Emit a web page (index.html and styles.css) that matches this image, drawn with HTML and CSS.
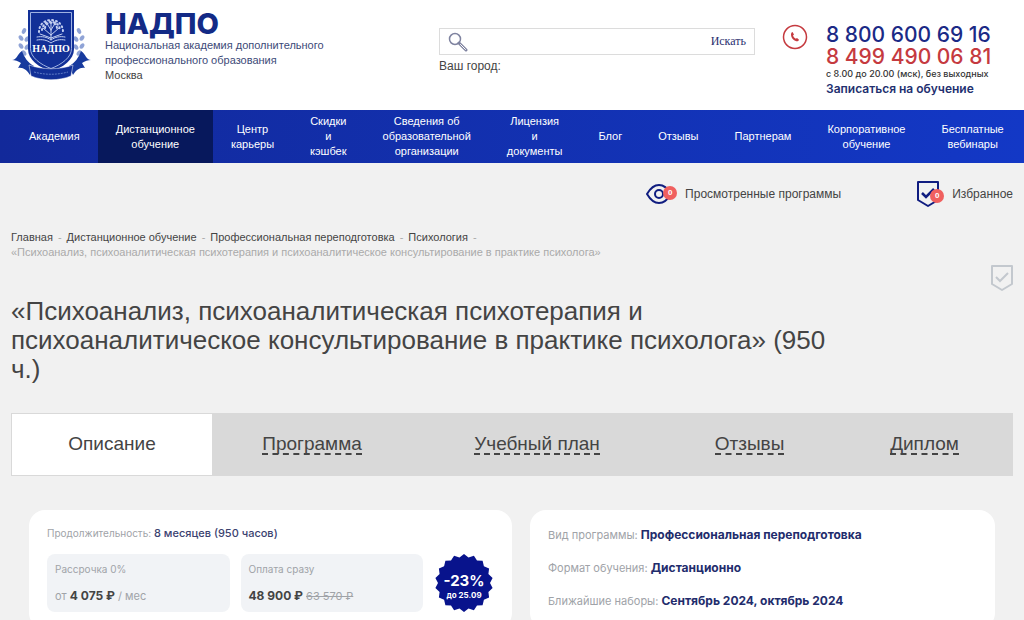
FILE: index.html
```
<!DOCTYPE html>
<html lang="ru">

<head>
    <meta charset="UTF-8">
    <meta name="viewport" content="width=device-width, initial-scale=1">
    <title>НАДПО</title>
    <link rel="stylesheet" href="styles.css">
</head>

<body>
    <header class="header">
        <a class="brand" href="#">
            <svg class="logo" viewBox="0 0 80 72" aria-hidden="true">
                <g fill="#8fa3d6">
                    <ellipse cx="12" cy="22" rx="2" ry="3" transform="rotate(25 12 22)" />
                    <ellipse cx="9" cy="29" rx="2" ry="3" transform="rotate(-35 9 29)" />
                    <ellipse cx="15" cy="30" rx="2" ry="3" transform="rotate(35 15 30)" />
                    <ellipse cx="9" cy="37" rx="2" ry="3" transform="rotate(-35 9 37)" />
                    <ellipse cx="15" cy="38" rx="2" ry="3" transform="rotate(35 15 38)" />
                    <ellipse cx="12" cy="44" rx="2" ry="3" transform="rotate(-35 12 44)" />
                    <ellipse cx="67" cy="22" rx="2" ry="3" transform="rotate(-25 67 22)" />
                    <ellipse cx="64" cy="30" rx="2" ry="3" transform="rotate(-35 64 30)" />
                    <ellipse cx="70" cy="29" rx="2" ry="3" transform="rotate(35 70 29)" />
                    <ellipse cx="64" cy="38" rx="2" ry="3" transform="rotate(-35 64 38)" />
                    <ellipse cx="70" cy="37" rx="2" ry="3" transform="rotate(35 70 37)" />
                    <ellipse cx="67" cy="44" rx="2" ry="3" transform="rotate(35 67 44)" />
                </g>
                <path fill="#173a9e" d="M0 51c5 0 5-6 10-9 2 6 6 12 12 15l-4 9c-3-5-7-8-12-7l3-5c-3-2-6-3-9-3zM79 51c-5 0-5-6-10-9-2 6-6 12-12 15l4 9c3-5 7-8 12-7l-3-5c3-2 6-3 9-3z" />
                <path fill="#123097" d="M16 1h46v39c0 11-11 18-23 23-12-5-23-12-23-23z" />
                <path fill="none" stroke="#9fb2e2" d="M18.500 3.500h41v36c0 9-10 16-20.500 20-10.500-4-20.500-11-20.500-20z" />
                <g fill="none" stroke="#c3cff0" stroke-linecap="round">
                    <path d="M39 31V14M39 26l-8-7M39 26l8-7M39 21l-5-8M39 21l5-8M39 29l-11-4M39 29l11-4" />
                    <path stroke-width="2" stroke-dasharray="1 3" d="M27 23c0-16 24-16 24 0M30 21c1-11 17-11 18 0M33 19c1-7 11-7 12 0" />
                    <path d="M25 28c5-1 10 0 14 3 4-3 9-4 14-3M25 31c5-1 10 0 14 3 4-3 9-4 14-3" />
                </g>
                <text class="logo-text" x="39" y="43" text-anchor="middle">НАДПО</text>
                <path fill="#123097" stroke="#fff" stroke-width="0.500" d="M17 56c14 5 30 5 44 0l-2 11c-12 5-28 5-40 0z" />
                <path fill="none" stroke="#5f7cc6" stroke-dasharray="2 1" d="M22 63c11 3 23 3 34 0" />
            </svg>
            <span class="brand-text">
                <strong class="brand-name">НАДПО</strong>
                <span>Национальная академия дополнительного</span>
                <span>профессионального образования</span>
                <span class="brand-city">Москва</span>
            </span>
        </a>

        <form class="search">
            <div class="search-box">
                <svg class="search-icon" viewBox="0 0 20 20" aria-hidden="true">
                    <circle cx="7" cy="7" r="5.500" fill="none" stroke="#7f83a0" stroke-width="1.500" />
                    <path d="M11 11l7 7" stroke="#7f83a0" stroke-width="3" stroke-linecap="round" />
                    <path d="M12.500 12.500l5 5" stroke="#fff" stroke-linecap="round" />
                </svg>
                <input class="search-input" type="text" aria-label="Поиск">
                <button class="search-button" type="submit">Искать</button>
            </div>
            <span class="city">Ваш город:</span>
        </form>

        <div class="contacts">
            <svg class="phone-icon" viewBox="0 0 26 26" aria-hidden="true">
                <circle cx="13" cy="13" r="11.500" fill="none" stroke="#c53a3f" stroke-width="1.500" />
                <path fill="#c53a3f" d="M10.500 8l1.500 2.500-1 1c.5 1.500 1.500 2.500 2.800 3.200l1.200-.7 2 1.700c-.5 1.300-1.500 1.800-2.700 1.500-3-.8-5.300-3.700-5.300-6.700 0-1.200.5-2.200 1.500-2.500z" />
            </svg>
            <div class="contacts-text">
                <a class="phone" href="tel:88006006916">8 800 600 69 16</a>
                <a class="phone phone-red" href="tel:84994900681">8 499 490 06 81</a>
                <span class="hours">с 8.00 до 20.00 (мск), без выходных</span>
                <a class="signup" href="#">Записаться на обучение</a>
            </div>
        </div>
    </header>

    <nav class="nav">
        <a href="#">Академия</a>
        <a class="active" href="#">Дистанционное<br>обучение</a>
        <a href="#">Центр<br>карьеры</a>
        <a href="#">Скидки<br>и<br>кэшбек</a>
        <a href="#">Сведения об<br>образовательной<br>организации</a>
        <a href="#">Лицензия<br>и<br>документы</a>
        <a href="#">Блог</a>
        <a href="#">Отзывы</a>
        <a href="#">Партнерам</a>
        <a href="#">Корпоративное<br>обучение</a>
        <a href="#">Бесплатные<br>вебинары</a>
    </nav>

    <main class="page">
        <div class="user-links">
            <a class="user-link" href="#">
                <span class="icon-wrap">
                    <svg class="eye-icon" viewBox="0 0 26 20" aria-hidden="true">
                        <path fill="none" stroke="#101d80" stroke-width="2" d="M1 10c7-12 17-12 24 0-7 12-17 12-24 0z" />
                        <circle cx="13" cy="10" r="4" fill="none" stroke="#101d80" stroke-width="2" />
                    </svg>
                    <span class="count">0</span>
                </span>
                Просмотренные программы
            </a>
            <a class="user-link" href="#">
                <span class="icon-wrap">
                    <svg class="flag-icon" viewBox="0 0 22 26" aria-hidden="true">
                        <path fill="none" stroke="#101d80" stroke-width="2" stroke-linejoin="round" d="M1 1h20v18l-10 6-10-6z" />
                        <path fill="none" stroke="#101d80" stroke-width="2.500" d="M5 12l4 4 8-8" />
                    </svg>
                    <span class="count">0</span>
                </span>
                Избранное
            </a>
        </div>

        <div class="breadcrumbs">
            <a href="#">Главная</a><i>-</i><a href="#">Дистанционное обучение</a><i>-</i><a href="#">Профессиональная переподготовка</a><i>-</i><a href="#">Психология</a><i>-</i>
            <div class="current">«Психоанализ, психоаналитическая психотерапия и психоаналитическое консультирование в практике психолога»</div>
        </div>

        <button class="favorite" type="button" aria-label="В избранное">
            <svg viewBox="0 0 22 26" aria-hidden="true">
                <path fill="none" stroke="#c3c8ce" stroke-width="2" stroke-linejoin="round" d="M1 1h20v18l-10 6-10-6z" />
                <path fill="none" stroke="#c3c8ce" stroke-width="2" d="M5 12l4 4 8-8" />
            </svg>
        </button>

        <h1>«Психоанализ, психоаналитическая психотерапия и психоаналитическое консультирование в практике психолога» (950 ч.)</h1>

        <div class="tabs">
            <a class="tab active" href="#"><span>Описание</span></a>
            <a class="tab" href="#"><span>Программа</span></a>
            <a class="tab tab-wide" href="#"><span>Учебный план</span></a>
            <a class="tab tab-short" href="#"><span>Отзывы</span></a>
            <a class="tab tab-short" href="#"><span>Диплом</span></a>
        </div>

        <div class="cards">
            <section class="card">
                <p class="duration">Продолжительность: <b>8 месяцев (950 часов)</b></p>
                <div class="prices">
                    <div class="price">
                        <span>Рассрочка 0%</span>
                        <span class="price-value">от <strong>4 075 ₽</strong> / мес</span>
                    </div>
                    <div class="price">
                        <span>Оплата сразу</span>
                        <span class="price-value"><strong>48 900 ₽</strong> <s>63 570 ₽</s></span>
                    </div>
                    <svg class="discount" viewBox="-30 -30 60 60">
                        <polygon fill="#08138c" points="0,-29 4.500,-25.600 9.900,-27.300 13,-22.500 18.600,-22.200 19.900,-16.700 25.100,-14.500 24.400,-8.900 28.600,-5 26,0 28.600,5 24.400,8.900 25.100,14.500 19.900,16.700 18.600,22.200 13,22.500 9.900,27.300 4.500,25.600 0,29 -4.500,25.600 -9.900,27.300 -13,22.500 -18.600,22.200 -19.900,16.700 -25.100,14.500 -24.400,8.900 -28.600,5 -26,0 -28.600,-5 -24.400,-8.900 -25.100,-14.500 -19.900,-16.700 -18.600,-22.200 -13,-22.500 -9.900,-27.300 -4.500,-25.600" />
                        <text class="discount-value" x="0" y="3" text-anchor="middle">-23%</text>
                        <text class="discount-date" x="0" y="15" text-anchor="middle">до 25.09</text>
                    </svg>
                </div>
            </section>

            <section class="card facts">
                <p>Вид программы: <b>Профессиональная переподготовка</b></p>
                <p>Формат обучения: <b>Дистанционно</b></p>
                <p>Ближайшие наборы: <b>Сентябрь 2024, октябрь 2024</b></p>
            </section>
        </div>
    </main>
</body>

</html>
```
FILE: styles.css
```
* {
    box-sizing: border-box;
}

body {
    margin: 0;
    background-color: #f1f1f1;
    color: #444;
    font-family: "Liberation Sans", Arial, sans-serif;
    font-size: 12px;
    line-height: 15px;
}

a {
    color: inherit;
    text-decoration: none;
}

.header {
    display: flex;
    align-items: flex-start;
    min-height: 110px;
    padding: 9px 12px;
    background-color: #fff;
}

.brand {
    display: flex;
    flex: 1;
    gap: 13px;
    color: #3c4a78;
    font-size: 11px;
    white-space: nowrap;
}

.logo {
    width: 80px;
    height: 72px;
}

.logo-text {
    font: bold 10px "Liberation Serif", serif;
    fill: #fff;
}

.brand-text {
    display: flex;
    flex-direction: column;
}

.brand-name {
    color: #132a86;
    font-family: Inter, sans-serif;
    font-size: 29px;
    font-weight: 800;
    line-height: 29px;
}

.brand-city {
    color: #444;
}

.search {
    width: 316px;
    margin-top: 19px;
}

.search-box {
    display: flex;
    align-items: center;
    height: 27px;
    padding: 0 8px;
    border: 1px solid #dcdcdc;
    background-color: #fff;
}

.search-icon {
    width: 20px;
    height: 20px;
}

.search-input {
    flex: 1;
    min-width: 0;
    border: none;
    outline: none;
    background: none;
}

.search-button {
    padding: 0;
    border: none;
    background: none;
    color: #2a3070;
    font-family: "Liberation Serif", serif;
    font-size: 12px;
    cursor: pointer;
}

.city {
    display: block;
    margin-top: 4px;
}

.contacts {
    display: flex;
    width: 230px;
    margin: 15px 0 0 27px;
    gap: 18px;
    white-space: nowrap;
}

.phone-icon {
    width: 26px;
    height: 26px;
}

.contacts-text {
    display: flex;
    flex-direction: column;
    font-family: Inter, "Noto Sans", sans-serif;
}

.phone {
    color: #1b2a86;
    font-size: 21px;
    font-weight: 500;
    line-height: 22px;
}

.phone-red {
    color: #c53a3f;
}

.hours {
    color: #333;
    font-size: 9px;
    font-weight: 500;
    line-height: 12px;
}

.signup {
    color: #23306f;
    font-weight: 600;
    line-height: 18px;
}

.nav {
    display: flex;
    min-height: 53px;
    padding-left: 11px;
    background: linear-gradient(to right, #12299a, #1338c6);
    color: #fff;
    font-size: 11px;
    text-align: center;
}

.nav a {
    display: flex;
    flex-direction: column;
    justify-content: center;
    padding: 0 18px;
}

.nav .active {
    background-color: #07185c;
}

.page {
    padding: 0 11px;
}

.user-links {
    display: flex;
    justify-content: flex-end;
    gap: 76px;
    padding-top: 17px;
}

.user-link {
    display: flex;
    align-items: center;
    height: 28px;
    gap: 8px;
    font-size: 12px;
}

.icon-wrap {
    display: flex;
    position: relative;
    padding-right: 5px;
}

.eye-icon {
    width: 26px;
    height: 20px;
}

.flag-icon {
    width: 22px;
    height: 26px;
}

.count {
    position: absolute;
    right: 0;
    bottom: 4px;
    width: 14px;
    height: 14px;
    border-radius: 50%;
    background-color: #f0605f;
    color: #fff;
    font-size: 8px;
    font-weight: bold;
    line-height: 14px;
    text-align: center;
}

.breadcrumbs {
    margin-top: 22px;
    font-size: 11px;
}

.breadcrumbs i {
    margin: 0 5px;
    color: #aaa;
    font-style: normal;
}

.breadcrumbs .current {
    color: #aaa;
}

.favorite {
    display: block;
    margin: 5px 0 0 auto;
    padding: 0;
    border: none;
    background: none;
    cursor: pointer;
}

.favorite svg {
    display: block;
    width: 22px;
    height: 26px;
}

h1 {
    max-width: 850px;
    margin: 6px 0 29px;
    font-size: 26px;
    font-weight: normal;
    line-height: 29px;
}

.tabs {
    display: flex;
    height: 63px;
    border: 1px solid #d9d9d9;
    background-color: #d9d9d9;
    font-size: 19px;
}

.tab {
    display: flex;
    flex: 8 1 0;
    align-items: center;
    justify-content: center;
    line-height: 18px;
}

.tab-wide {
    flex-grow: 10;
}

.tab-short {
    flex-grow: 7;
}

.tab span {
    border-bottom: 2px dashed #444;
}

.tab.active {
    background-color: #fff;
}

.tab.active span {
    border-color: transparent;
}

.cards {
    display: grid;
    grid-template-columns: 483fr 465fr;
    gap: 18px;
    padding: 34px 18px;
}

.card {
    padding: 16px 18px;
    border-radius: 16px;
    background-color: #fff;
    color: #a0a3a8;
    font-family: Inter, sans-serif;
    font-size: 10px;
}

.card p {
    margin: 0;
}

.duration b {
    color: #3b4270;
    font-size: 11px;
    font-weight: 500;
}

.prices {
    display: flex;
    align-items: center;
    gap: 11px;
    margin-top: 12px;
}

.price {
    display: flex;
    flex: 1;
    flex-direction: column;
    justify-content: space-between;
    height: 58px;
    padding: 8px;
    border-radius: 8px;
    background-color: #f1f3f6;
}

.price-value {
    font-size: 11px;
}

.price strong {
    color: #444;
    font-size: 12px;
}

.discount {
    width: 60px;
    height: 60px;
}

.discount-value {
    fill: #fff;
    font-size: 15px;
    font-weight: bold;
}

.discount-date {
    fill: #fff;
    font-size: 8px;
    font-weight: bold;
}

.facts {
    display: flex;
    flex-direction: column;
    gap: 17px;
    padding-top: 17px;
    font-size: 11px;
}

.facts b {
    color: #222c6c;
    font-size: 12px;
}
```
